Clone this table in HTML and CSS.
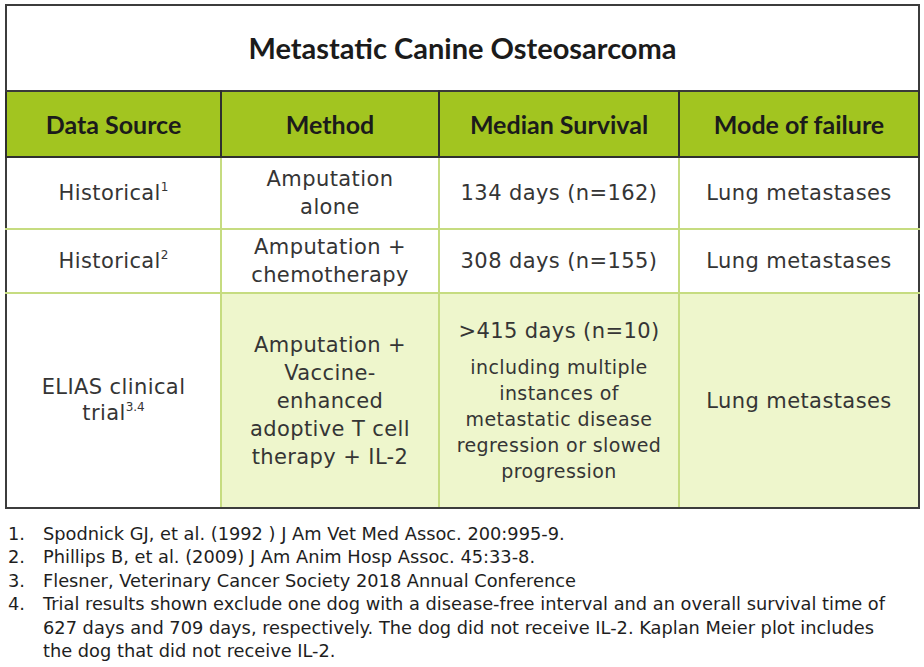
FILE: index.html
```html
<!DOCTYPE html>
<html>
<head>
<meta charset="utf-8">
<link rel="stylesheet" href="styles.css">
</head>
<body>
<div class="page">
  <table class="grid">
    <colgroup>
      <col class="c1"><col class="c2"><col class="c3"><col class="c4">
    </colgroup>
    <tr class="title-row"><th colspan="4">Metastatic Canine Osteosarcoma</th></tr>
    <tr class="head-row">
      <th>Data Source</th><th>Method</th><th>Median Survival</th><th>Mode of failure</th>
    </tr>
    <tr class="r1">
      <td>Historical<sup>1</sup></td>
      <td>Amputation<br>alone</td>
      <td>134 days (n=162)</td>
      <td>Lung metastases</td>
    </tr>
    <tr class="r2">
      <td>Historical<sup>2</sup></td>
      <td>Amputation +<br>chemotherapy</td>
      <td>308 days (n=155)</td>
      <td>Lung metastases</td>
    </tr>
    <tr class="r3">
      <td class="plain"><span class="elias">ELIAS clinical<br>trial<sup>3.4</sup></span></td>
      <td class="hl method">Amputation +<br>Vaccine-<br>enhanced<br>adoptive T cell<br>therapy + IL-2</td>
      <td class="hl surv"><div class="big">&gt;415 days (n=10)</div><div class="small">including multiple<br>instances of<br>metastatic disease<br>regression or slowed<br>progression</div></td>
      <td class="hl">Lung metastases</td>
    </tr>
  </table>
  <ol class="notes">
    <li><span class="num">1.</span><span class="txt">Spodnick GJ, et al. (1992 ) J Am Vet Med Assoc. 200:995-9.</span></li>
    <li><span class="num">2.</span><span class="txt">Phillips B, et al. (2009) J Am Anim Hosp Assoc. 45:33-8.</span></li>
    <li><span class="num">3.</span><span class="txt">Flesner, Veterinary Cancer Society 2018 Annual Conference</span></li>
    <li><span class="num">4.</span><span class="txt">Trial results shown exclude one dog with a disease-free interval and an overall survival time of 627 days and 709 days, respectively. The dog did not receive IL-2. Kaplan Meier plot includes the dog that did not receive IL-2.</span></li>
  </ol>
</div>
</body>
</html>
```

FILE: styles.css
```css
html, body {
  margin: 0;
  padding: 0;
  background: #ffffff;
}
.page {
  width: 924px;
  height: 667px;
  padding: 4px 0 0 5px;
  box-sizing: border-box;
}
.grid {
  border-collapse: collapse;
  width: 913px;
  table-layout: fixed;
  font-family: "DejaVu Sans", sans-serif;
  color: #353535;
  border: 2px solid #3c3c3c;
}
.c1 { width: 215px; }
.c2 { width: 218px; }
.c3 { width: 240px; }
.c4 { width: 240px; }

.title-row th {
  height: 82px;
  font-family: "Lato", sans-serif;
  font-weight: bold;
  font-size: 29px;
  color: #1b1b1b;
  text-align: center;
  padding: 0 0 2px 0;
  border: none;
}
.head-row th {
  height: 64px;
  background: #a2c520;
  font-family: "Lato", sans-serif;
  font-weight: bold;
  font-size: 25px;
  color: #1b1b1b;
  border: 2px solid #2f2f2f;
  border-top: 2px solid #3a3a3a;
  padding: 0;
}
td {
  text-align: center;
  vertical-align: middle;
  font-size: 21px;
  letter-spacing: 0.4px;
  line-height: 28px;
  border: 2px solid #c6dc80;
  padding: 0;
}
td:first-child { border-left: 2px solid #3c3c3c; }
td:last-child { border-right: 2px solid #3c3c3c; }
.r3 td { border-bottom: 2px solid #3c3c3c; }
.r1 td { height: 70px; }
.r2 td { height: 62px; }
.r3 td { height: 213px; }
.hl { background: #eef6cc; }
sup {
  font-size: 12px;
  letter-spacing: 0;
  line-height: 0;
  vertical-align: 9px;
}
.elias { display: inline-block; line-height: 26px; }
.surv .big { font-size: 21px; line-height: 26px; margin-bottom: 10px; }
.surv .small { font-size: 19px; letter-spacing: 0.4px; line-height: 26px; }

.notes {
  list-style: none;
  margin: 13px 0 0 3px;
  padding: 0;
  font-family: "DejaVu Sans", sans-serif;
  font-size: 17.8px;
  line-height: 23.4px;
  color: #1e1e1e;
  width: 883px;
}
.notes li { display: flex; }
.notes .num { flex: 0 0 35px; }
.notes .txt { flex: 1; }
```
